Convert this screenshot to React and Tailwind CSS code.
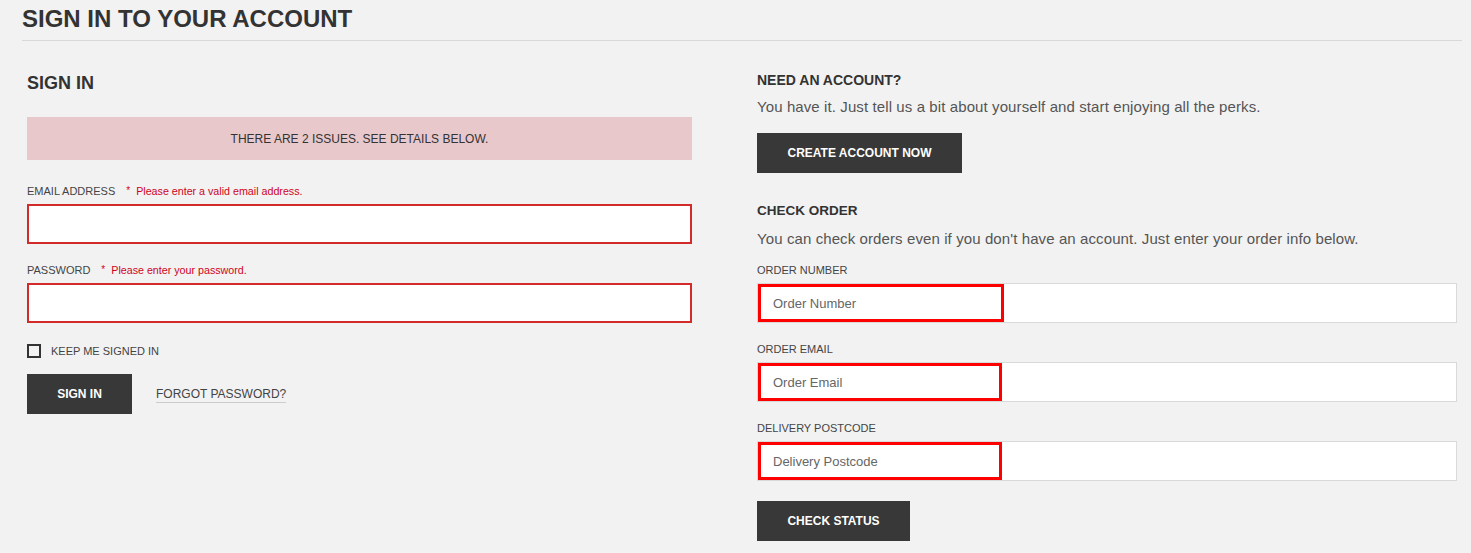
import React from "react";

const font = { fontFamily: '"Liberation Sans", Arial, sans-serif' };

function ErrorField({ label, error, type = "text" }) {
  return (
    <div>
      <div className="flex items-center pt-[1px] text-[11px] leading-[14px]">
        <span className="uppercase text-[#444]">{label}</span>
        <span className="ml-[11px] text-[10px] text-[#d0021b]">*</span>
        <span className="ml-[6px] text-[10.7px] text-[#d0021b]">{error}</span>
      </div>
      <input
        type={type}
        className="mt-[6px] block h-[40px] w-full border-2 border-[#d32a2a] bg-white px-3 outline-none"
      />
    </div>
  );
}

function OrderField({ label, placeholder, boxWidth }) {
  return (
    <div className="mt-[18px] first:mt-[13px]">
      <div className="pt-[1px] text-[11px] leading-[14px] uppercase text-[#444]">{label}</div>
      <div className="mt-[6px] flex h-[40px] w-full border border-[#d9d9d9] bg-white">
        <div
          className={`flex h-full items-center border-[3px] border-[#ff0000] pl-[12px] pt-[1px] text-[13px] text-[#666] ${boxWidth}`}
        >
          {placeholder}
        </div>
      </div>
    </div>
  );
}

export default function App() {
  return (
    <div style={font} className="min-h-screen bg-[#f2f2f2] pl-[22px] pr-[9px] text-[#333]">
      <div className="border-b border-[#d9d9d9] pt-[5px] pb-[7px]">
        <h1 className="text-[24px] font-bold leading-[28px] text-[#333]">SIGN IN TO YOUR ACCOUNT</h1>
      </div>

      <div className="flex pl-[5px]">
        <div className="w-[665px]">
          <h2 className="mt-[32px] text-[18px] font-bold leading-[20px]">SIGN IN</h2>
          <div className="mt-[24px] flex h-[43px] items-center justify-center bg-[#e8c8cb] text-[12px] uppercase text-[#333]">
            There are 2 issues. See details below.
          </div>

          <div className="mt-[23px]">
            <ErrorField label="Email Address" error="Please enter a valid email address." />
          </div>
          <div className="mt-[18px]">
            <ErrorField label="Password" error="Please enter your password." type="password" />
          </div>

          <label className="mt-[20px] flex items-center">
            <span className="block h-[14px] w-[14px] border-2 border-[#333] bg-[#f2f2f2]" />
            <span className="ml-[10px] pt-[1px] text-[11px] uppercase leading-[14px] text-[#444]">Keep me signed in</span>
          </label>

          <div className="mt-[16px] flex items-center">
            <button className="h-[40px] w-[105px] bg-[#383838] text-[12px] font-bold uppercase text-white">
              Sign in
            </button>
            <a className="ml-[24px] mt-[2px] border-b border-[#cccccc] pb-[1px] text-[12px] uppercase leading-[14px] text-[#444]">
              Forgot password?
            </a>
          </div>
        </div>

        <div className="ml-[65px] w-[700px]">
          <h3 className="mt-[31px] text-[14px] font-bold leading-[16px]">NEED AN ACCOUNT?</h3>
          <p className="mt-[9px] text-[15px] leading-[20px] tracking-[0.1px] text-[#555]">
            You have it. Just tell us a bit about yourself and start enjoying all the perks.
          </p>
          <button className="mt-[16px] h-[40px] w-[205px] bg-[#383838] text-[12px] font-bold uppercase text-white">
            Create account now
          </button>

          <h3 className="mt-[30px] text-[13.5px] font-bold leading-[16px]">CHECK ORDER</h3>
          <p className="mt-[10px] text-[15px] leading-[20px] tracking-[0.1px] text-[#555]">
            You can check orders even if you don't have an account. Just enter your order info below.
          </p>

          <div>
            <OrderField label="Order Number" placeholder="Order Number" boxWidth="w-[246px]" />
            <OrderField label="Order Email" placeholder="Order Email" boxWidth="w-[244px]" />
            <OrderField label="Delivery Postcode" placeholder="Delivery Postcode" boxWidth="w-[244px]" />
          </div>

          <button className="mt-[20px] mb-[12px] h-[40px] w-[153px] bg-[#383838] text-[12px] font-bold uppercase text-white">
            Check status
          </button>
        </div>
      </div>
    </div>
  );
}
